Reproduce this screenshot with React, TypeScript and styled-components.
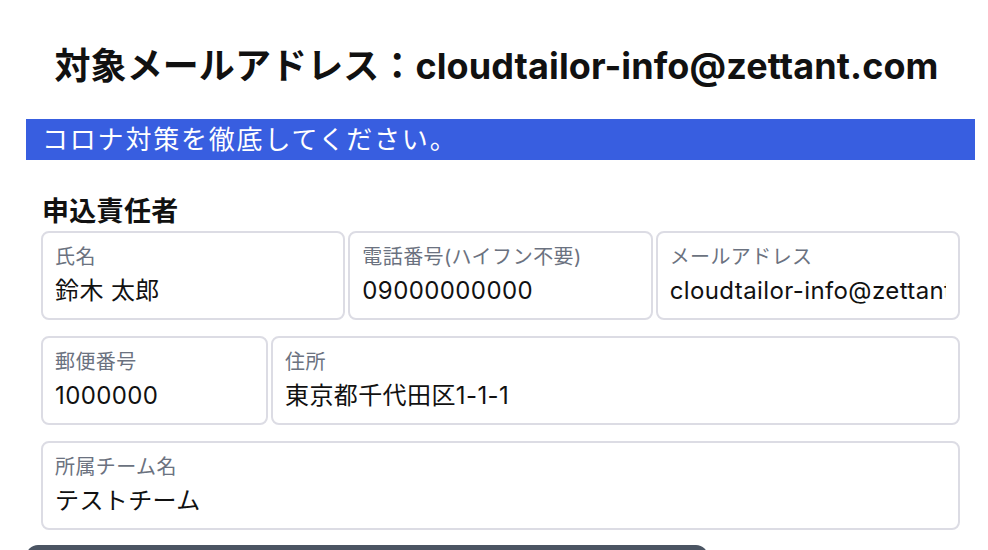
import { FC } from "react";
import styled, { createGlobalStyle } from "styled-components";

const GlobalStyle = createGlobalStyle`
  html, body {
    margin: 0;
    padding: 0;
    background: #fff;
  }
  body {
    font-family: "Inter", "Noto Sans CJK JP", sans-serif;
    color: #111;
  }
`;

const Page = styled.div`
  width: 949px;
  margin-left: 26px;
  padding-top: 46px;
`;

const Title = styled.h1`
  margin: 0 0 32px;
  padding-right: 8px;
  text-align: center;
  font-size: 36px;
  font-weight: 700;
  line-height: 41px;
  letter-spacing: 0.1px;
`;

const Notice = styled.div`
  height: 41px;
  background: #385ee0;
  color: #fff;
  font-size: 26px;
  line-height: 41px;
  letter-spacing: 1.8px;
  padding-left: 16px;
`;

const Section = styled.section`
  padding: 0 15px 15px;
`;

const SectionTitle = styled.h2`
  margin: 33px 0 0;
  font-size: 27px;
  font-weight: 700;
  line-height: 38px;
  letter-spacing: 0.3px;
  padding-left: 1px;
`;

const Row = styled.div<{ $cols: string }>`
  display: grid;
  grid-template-columns: ${({ $cols }) => $cols};
  gap: 3px;

  & + & {
    margin-top: 16px;
  }
`;

const Field = styled.label`
  display: flex;
  flex-direction: column;
  border: 2px solid #dcdce4;
  border-radius: 8px;
  padding: 11px 12px 11px;
  min-width: 0;
`;

const Label = styled.span`
  font-size: 20px;
  line-height: 26px;
  letter-spacing: 0.4px;
  color: #6b7280;
  white-space: nowrap;
`;

const Value = styled.span`
  font-size: 24px;
  line-height: 33px;
  margin-top: 4px;
  white-space: nowrap;
  letter-spacing: 0.4px;
  overflow: hidden;
`;

const SubmitBar = styled.div`
  width: 682px;
  height: 40px;
  background: #4b5563;
  border-radius: 12px;
`;

const fields = [
  { cols: "1fr 1fr 1fr", items: [["氏名", "鈴木 太郎"], ["電話番号(ハイフン不要)", "09000000000"], ["メールアドレス", "cloudtailor-info@zettant.com"]] },
  { cols: "227px 1fr", items: [["郵便番号", "1000000"], ["住所", "東京都千代田区1-1-1"]] },
  { cols: "1fr", items: [["所属チーム名", "テストチーム"]] },
];

const App: FC = () => (
  <>
    <GlobalStyle />
    <Page>
      <Title>対象メールアドレス：cloudtailor-info@zettant.com</Title>
      <Notice>コロナ対策を徹底してください。</Notice>
      <Section>
        <SectionTitle>申込責任者</SectionTitle>
        {fields.map((row, i) => (
          <Row key={i} $cols={row.cols}>
            {row.items.map(([label, value]) => (
              <Field key={label}>
                <Label>{label}</Label>
                <Value>{value}</Value>
              </Field>
            ))}
          </Row>
        ))}
      </Section>
      <SubmitBar />
    </Page>
  </>
);

export default App;
